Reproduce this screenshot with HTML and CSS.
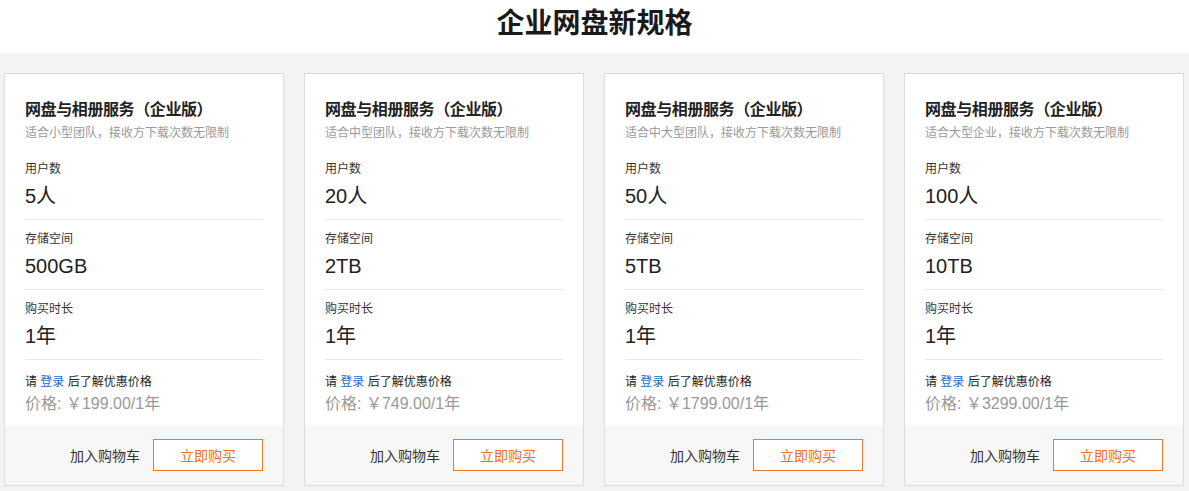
FILE: index.html
```html
<!DOCTYPE html>
<html lang="zh-CN">
<head>
<meta charset="utf-8">
<title>企业网盘新规格</title>
<link rel="stylesheet" href="styles.css">
</head>
<body>
<header class="top">
  <h1 class="page-title">企业网盘新规格</h1>
</header>
<main class="plans">
  <section class="card">
    <div class="card-body">
      <h2 class="card-title">网盘与相册服务（企业版）</h2>
      <p class="card-sub">适合小型团队，接收方下载次数无限制</p>
      <div class="row"><div class="label">用户数</div><div class="value">5人</div></div>
      <div class="row"><div class="label">存储空间</div><div class="value">500GB</div></div>
      <div class="row"><div class="label">购买时长</div><div class="value">1年</div></div>
      <p class="login">请 <a class="link" href="#">登录</a> 后了解优惠价格</p>
      <p class="price">价格: ￥199.00/1年</p>
    </div>
    <div class="card-foot">
      <span class="cart">加入购物车</span>
      <button class="buy">立即购买</button>
    </div>
  </section>
  <section class="card">
    <div class="card-body">
      <h2 class="card-title">网盘与相册服务（企业版）</h2>
      <p class="card-sub">适合中型团队，接收方下载次数无限制</p>
      <div class="row"><div class="label">用户数</div><div class="value">20人</div></div>
      <div class="row"><div class="label">存储空间</div><div class="value">2TB</div></div>
      <div class="row"><div class="label">购买时长</div><div class="value">1年</div></div>
      <p class="login">请 <a class="link" href="#">登录</a> 后了解优惠价格</p>
      <p class="price">价格: ￥749.00/1年</p>
    </div>
    <div class="card-foot">
      <span class="cart">加入购物车</span>
      <button class="buy">立即购买</button>
    </div>
  </section>
  <section class="card">
    <div class="card-body">
      <h2 class="card-title">网盘与相册服务（企业版）</h2>
      <p class="card-sub">适合中大型团队，接收方下载次数无限制</p>
      <div class="row"><div class="label">用户数</div><div class="value">50人</div></div>
      <div class="row"><div class="label">存储空间</div><div class="value">5TB</div></div>
      <div class="row"><div class="label">购买时长</div><div class="value">1年</div></div>
      <p class="login">请 <a class="link" href="#">登录</a> 后了解优惠价格</p>
      <p class="price">价格: ￥1799.00/1年</p>
    </div>
    <div class="card-foot">
      <span class="cart">加入购物车</span>
      <button class="buy">立即购买</button>
    </div>
  </section>
  <section class="card">
    <div class="card-body">
      <h2 class="card-title">网盘与相册服务（企业版）</h2>
      <p class="card-sub">适合大型企业，接收方下载次数无限制</p>
      <div class="row"><div class="label">用户数</div><div class="value">100人</div></div>
      <div class="row"><div class="label">存储空间</div><div class="value">10TB</div></div>
      <div class="row"><div class="label">购买时长</div><div class="value">1年</div></div>
      <p class="login">请 <a class="link" href="#">登录</a> 后了解优惠价格</p>
      <p class="price">价格: ￥3299.00/1年</p>
    </div>
    <div class="card-foot">
      <span class="cart">加入购物车</span>
      <button class="buy">立即购买</button>
    </div>
  </section>
</main>
</body>
</html>
```
FILE: styles.css
```css
* { box-sizing: border-box; }
html, body {
  margin: 0;
  padding: 0;
  background: #f3f3f3;
}
body {
  font-family: "Liberation Sans", "Noto Sans CJK SC", sans-serif;
  color: #333;
  min-height: 491px;
}
.top {
  height: 53px;
  background: #fff;
  display: flex;
  justify-content: center;
}
.page-title {
  margin: 0;
  font-size: 28px;
  line-height: 42px;
  font-weight: bold;
  color: #1a1a1a;
  font-family: "Noto Sans CJK SC", sans-serif;
}
.plans {
  display: flex;
  gap: 20px;
  padding: 20px 0 0 4px;
}
.card {
  width: 280px;
  background: #fff;
  border: 1px solid #dcdcdc;
  display: flex;
  flex-direction: column;
}
.card-body {
  padding: 22px 20px 10px;
}
.card-title {
  margin: 0;
  font-size: 16px;
  line-height: 24px;
  font-weight: bold;
  color: #222;
  font-family: "Noto Sans CJK SC", sans-serif;
  letter-spacing: -0.4px;
}
.card-sub {
  margin: 4px 0 8px;
  font-size: 12px;
  line-height: 18px;
  color: #999;
}
.row {
  padding: 9px 0 9px;
  border-bottom: 1px solid #eaeaea;
}
.label {
  font-size: 12px;
  line-height: 20px;
  color: #333;
}
.value {
  margin-top: 3px;
  font-size: 20px;
  line-height: 28px;
  color: #222;
}
.login {
  margin: 12px 0 0;
  font-size: 12px;
  line-height: 20px;
  color: #222;
}
.link {
  color: #2468c2;
  text-decoration: none;
}
.price {
  margin: 1px 0 0;
  font-size: 16px;
  line-height: 22px;
  color: #999;
}
.card-foot {
  height: 60px;
  background: #f7f7f7;
  display: flex;
  justify-content: flex-end;
  align-items: center;
  gap: 13px;
  padding-right: 20px;
}
.cart {
  font-size: 14px;
  color: #333;
}
.buy {
  width: 110px;
  height: 32px;
  border: 1px solid #ee7a2e;
  background: #fff;
  color: #f06d22;
  font-size: 14px;
  font-family: "Liberation Sans", "Noto Sans CJK SC", sans-serif;
  padding: 0;
  cursor: pointer;
}
```
